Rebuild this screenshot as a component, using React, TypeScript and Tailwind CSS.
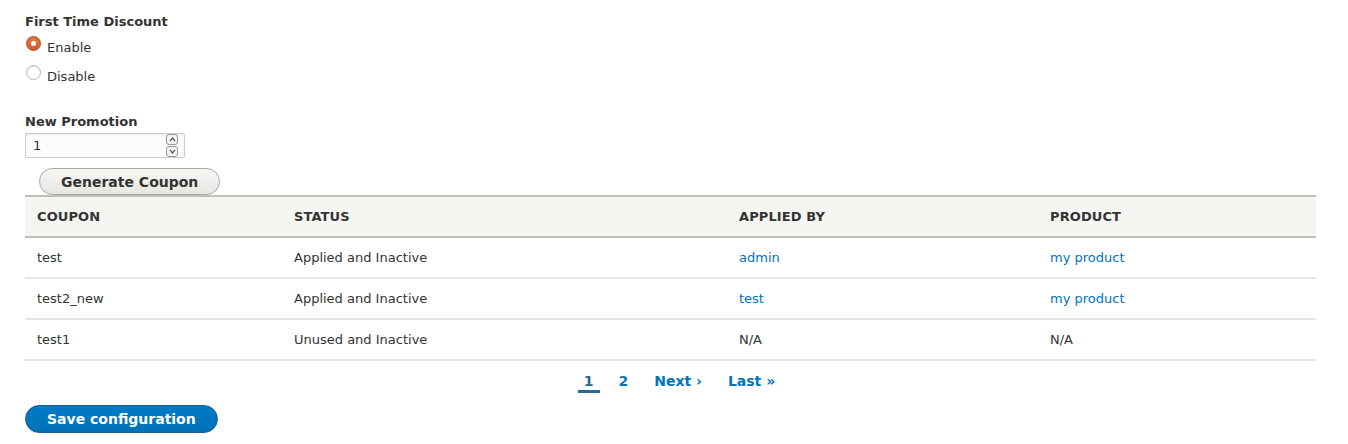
import React from "react";

const rows = [
  { coupon: "test", status: "Applied and Inactive", by: "admin", product: "my product", link: true },
  { coupon: "test2_new", status: "Applied and Inactive", by: "test", product: "my product", link: true },
  { coupon: "test1", status: "Unused and Inactive", by: "N/A", product: "N/A", link: false },
];

const Radio = ({ checked, label }: { checked?: boolean; label: string }) => (
  <label className="flex items-start h-[29px]">
    {checked ? (
      <span className="mt-[6px] w-[15px] h-[15px] rounded-full border border-[#b84c22] bg-gradient-to-b from-[#f07b4d] to-[#d05a2c] flex items-center justify-center shadow-[inset_0_1px_1px_rgba(0,0,0,0.2)]">
        <span className="w-[5px] h-[5px] rounded-full bg-white" />
      </span>
    ) : (
      <span className="mt-[6px] w-[15px] h-[15px] rounded-full border border-[#b5b5b5] bg-white shadow-[inset_0_1px_1px_rgba(0,0,0,0.1)]" />
    )}
    <span className="ml-[6px] mt-[10px] text-[13px] leading-[16px] text-[#333]">{label}</span>
  </label>
);

export default function App() {
  return (
    <div className="min-h-screen bg-white px-[25px] pt-[14px] font-['DejaVu_Sans',sans-serif] text-[#333]">
      <div className="text-[13px] font-bold leading-[16px]">First Time Discount</div>
      <div className="pl-[1px]">
        <Radio checked label="Enable" />
        <Radio label="Disable" />
      </div>

      <div className="mt-[26px] text-[13px] font-bold leading-[16px]">New Promotion</div>
      <div className="mt-[3px] w-[160px] h-[25px] border border-[#ccc] rounded-[2px] bg-[#fcfcfa] flex items-center pl-[7px] pr-[6px] shadow-[inset_0_1px_2px_rgba(0,0,0,0.08)]">
        <span className="text-[13px] flex-1">1</span>
        <div className="flex flex-col gap-[1px]">
          <span className="w-[12px] h-[11px] border border-[#999] rounded-[3px] bg-[#f4f4f4] flex items-center justify-center">
            <svg width="7" height="5" viewBox="0 0 7 5"><path d="M1 4 L3.5 1 L6 4" fill="none" stroke="#555" strokeWidth="1.2" /></svg>
          </span>
          <span className="w-[12px] h-[11px] border border-[#999] rounded-[3px] bg-[#f4f4f4] flex items-center justify-center">
            <svg width="7" height="5" viewBox="0 0 7 5"><path d="M1 1 L3.5 4 L6 1" fill="none" stroke="#555" strokeWidth="1.2" /></svg>
          </span>
        </div>
      </div>

      <button className="mt-[10px] ml-[14px] h-[27px] px-[21px] rounded-full border border-[#a6a6a6] bg-gradient-to-b from-[#f6f6f3] to-[#e7e7e2] text-[14px] font-bold text-[#333] leading-none">
        Generate Coupon
      </button>

      <table className="w-[1291px] border-collapse text-[13px]">
        <thead>
          <tr className="bg-[#f5f5f2] border-t-2 border-b-2 border-[#bfbfba] h-[41px] text-left">
            <th className="w-[257px] px-[12px] font-bold uppercase tracking-[0.1px]">Coupon</th>
            <th className="w-[445px] px-[12px] font-bold uppercase tracking-[0.1px]">Status</th>
            <th className="w-[311px] px-[12px] font-bold uppercase tracking-[0.1px]">Applied by</th>
            <th className="px-[12px] font-bold uppercase tracking-[0.1px]">Product</th>
          </tr>
        </thead>
        <tbody>
          {rows.map((r) => (
            <tr key={r.coupon} className="h-[41px] border-b-2 border-[#e6e4df]">
              <td className="px-[12px]">{r.coupon}</td>
              <td className="px-[12px]">{r.status}</td>
              <td className="px-[12px]">
                {r.link ? <a className="text-[#0074bd]" href="#">{r.by}</a> : r.by}
              </td>
              <td className="px-[12px]">
                {r.link ? <a className="text-[#0074bd]" href="#">{r.product}</a> : r.product}
              </td>
            </tr>
          ))}
        </tbody>
      </table>

      <nav className="w-[1291px] flex justify-center items-start h-[43px] pt-[12px] text-[14px] font-bold leading-[16px]">
        <div className="flex items-start pl-[12px]">
          <span className="px-[6px] pb-[1px] border-b-[3px] border-[#2a678c] text-[#2a678c]">1</span>
          <a href="#" className="ml-[19px] text-[#0074bd]">2</a>
          <a href="#" className="ml-[26px] text-[#0074bd]">Next ›</a>
          <a href="#" className="ml-[26px] text-[#0074bd]">Last »</a>
        </div>
      </nav>

      <button className="mt-[1px] h-[28px] px-[21px] rounded-full border border-[#1e5c90] bg-gradient-to-b from-[#007bc6] to-[#0071b8] text-white text-[14px] font-bold leading-none">
        Save configuration
      </button>
    </div>
  );
}
